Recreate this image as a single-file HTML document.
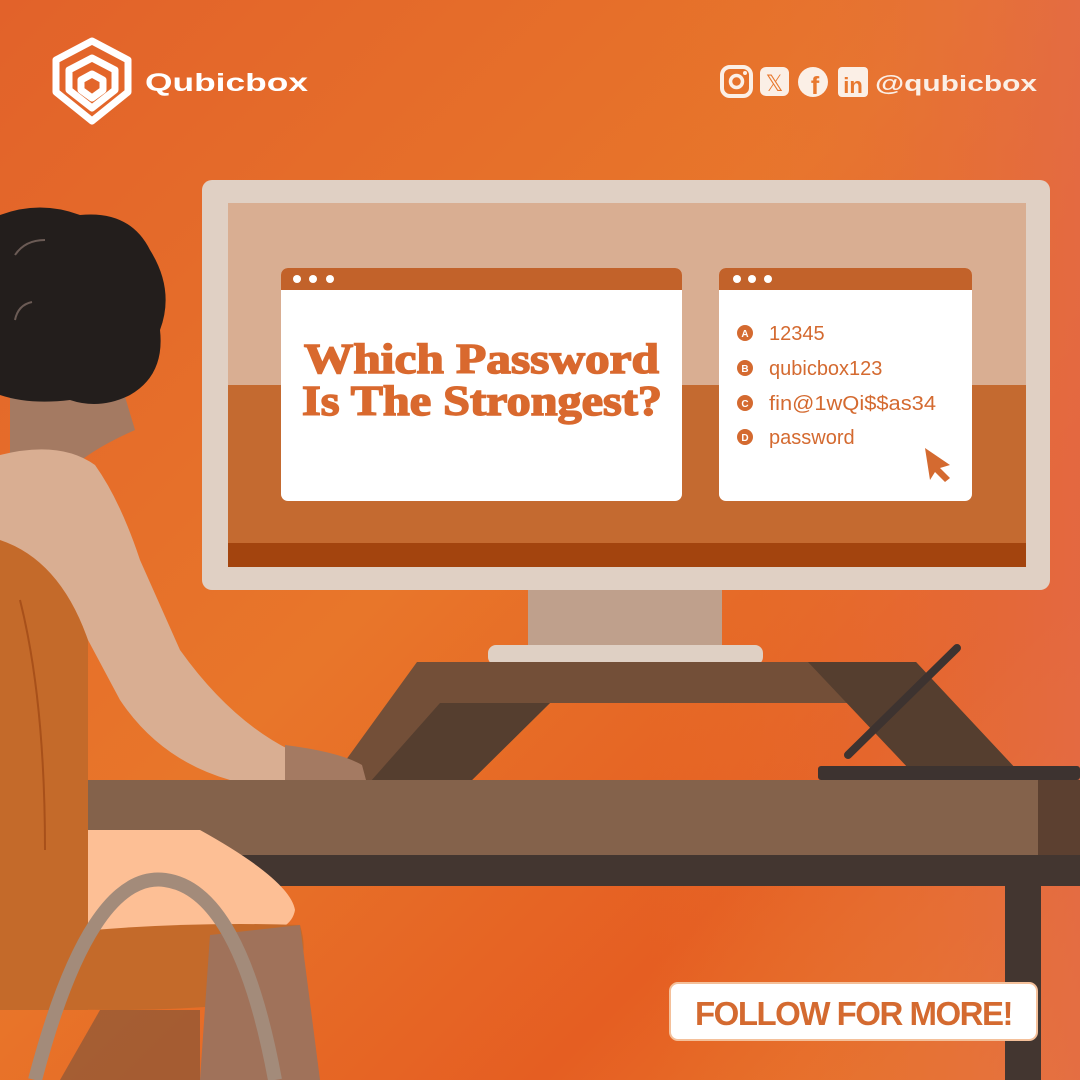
<!DOCTYPE html>
<html><head><meta charset="utf-8"><style>
html,body{margin:0;padding:0;width:1080px;height:1080px;overflow:hidden}
svg{display:block}
</style></head><body>
<svg width="1080" height="1080" viewBox="0 0 1080 1080" xmlns="http://www.w3.org/2000/svg">
<defs>
<linearGradient id="bg" x1="0" y1="0" x2="1" y2="1">
<stop offset="0" stop-color="#E2622A"/><stop offset="0.45" stop-color="#E8762A"/><stop offset="0.75" stop-color="#E55E22"/><stop offset="1" stop-color="#E9802E"/>
</linearGradient>
<linearGradient id="bg2" x1="0" y1="0" x2="1" y2="0">
<stop offset="0.6" stop-color="#E8782E" stop-opacity="0"/><stop offset="1" stop-color="#E36A48" stop-opacity="0.8"/>
</linearGradient>
</defs>
<rect width="1080" height="1080" fill="url(#bg)"/>
<rect width="1080" height="1080" fill="url(#bg2)"/>

<!-- logo -->
<g fill="none" stroke="#fff" stroke-width="7" stroke-linejoin="round">
<path d="M92 41 L128 60 L128 92 L92 121 L56 92 L56 60 Z"/>
<path d="M92 58 L115 70 L115 90 L92 108 L69 90 L69 70 Z"/>
<path d="M92 74 L103 80 L103 90 L92 98 L81 90 L81 80 Z"/>
</g>
<text x="145" y="91" font-family="Liberation Sans, sans-serif" font-weight="900" font-size="25" fill="#fff" textLength="163" lengthAdjust="spacingAndGlyphs">Qubicbox</text>

<!-- social -->
<g fill="#FBEFE6">
<rect x="722" y="67" width="29" height="29" rx="8" fill="none" stroke="#FBEFE6" stroke-width="4"/>
<circle cx="736.5" cy="81.5" r="6" fill="none" stroke="#FBEFE6" stroke-width="3.5"/>
<circle cx="745" cy="73" r="2"/>
<rect x="760" y="67" width="29" height="29" rx="6"/>
<text x="774.5" y="91" text-anchor="middle" font-family="DejaVu Sans, sans-serif" font-size="22" fill="#E8782E">𝕏</text>
<circle cx="813" cy="82" r="15"/>
<text x="815" y="94" text-anchor="middle" font-family="Liberation Sans, sans-serif" font-weight="bold" font-size="25" fill="#E8782E">f</text>
<rect x="838" y="67" width="30" height="30" rx="4"/>
<text x="853" y="93" text-anchor="middle" font-family="Liberation Sans, sans-serif" font-weight="bold" font-size="22" fill="#E8782E">in</text>
</g>
<text x="875" y="91" font-family="Liberation Sans, sans-serif" font-weight="900" font-size="22" fill="#FBEFE6" textLength="162" lengthAdjust="spacingAndGlyphs">@qubicbox</text>

<!-- monitor -->
<rect x="528" y="585" width="194" height="64" fill="#BFA08C"/>
<rect x="488" y="645" width="275" height="20" rx="8" fill="#DFD0C4"/>
<rect x="202" y="180" width="848" height="410" rx="10" fill="#E0D0C4"/>
<rect x="228" y="203" width="798" height="182" fill="#D9AE92"/>
<rect x="228" y="385" width="798" height="158" fill="#C46A30"/>
<rect x="228" y="543" width="798" height="24" fill="#A3440E"/>

<!-- card 1 -->
<rect x="281" y="268" width="401" height="233" rx="7" fill="#fff"/>
<path d="M281 290 V275 a7 7 0 0 1 7 -7 H675 a7 7 0 0 1 7 7 V290 Z" fill="#C2622A"/>
<g fill="#fff"><circle cx="297" cy="279" r="4"/><circle cx="313" cy="279" r="4"/><circle cx="330" cy="279" r="4"/></g>
<g font-family="Liberation Serif, serif" font-weight="bold" font-size="42" fill="#D9692E" stroke="#D9692E" stroke-width="1.5">
<text x="304" y="373" textLength="355" lengthAdjust="spacingAndGlyphs">Which Password</text>
<text x="302" y="415" textLength="360" lengthAdjust="spacingAndGlyphs">Is The Strongest?</text>
</g>

<!-- card 2 -->
<rect x="719" y="268" width="253" height="233" rx="7" fill="#fff"/>
<path d="M719 290 V275 a7 7 0 0 1 7 -7 H965 a7 7 0 0 1 7 7 V290 Z" fill="#C2622A"/>
<g fill="#fff"><circle cx="737" cy="279" r="4"/><circle cx="752" cy="279" r="4"/><circle cx="768" cy="279" r="4"/></g>
<g fill="#D46A30">
<circle cx="745" cy="333" r="8"/><circle cx="745" cy="368" r="8"/><circle cx="745" cy="403" r="8"/><circle cx="745" cy="437" r="8"/>
</g>
<g font-family="Liberation Sans, sans-serif" font-weight="bold" font-size="10" fill="#fff" text-anchor="middle">
<text x="745" y="337">A</text><text x="745" y="372">B</text><text x="745" y="407">C</text><text x="745" y="441">D</text>
</g>
<g font-family="Liberation Sans, sans-serif" font-size="20" fill="#D46A30">
<text x="769" y="340">12345</text><text x="769" y="375">qubicbox123</text><text x="769" y="410" textLength="167" lengthAdjust="spacingAndGlyphs">fin@1wQi$$as34</text><text x="769" y="444">password</text>
</g>
<path d="M925 448 L950 465 L940 468 L950 478 L945 482 L935 472 L930 480 Z" fill="#D46A30"/>

<!-- riser -->
<path d="M417 662 L916 662 L1017 770 L910 770 L850 703 L550 703 L470 782 L330 782 Z" fill="#734F38"/>
<path d="M440 703 L550 703 L470 782 L370 782 Z" fill="#553E2F"/>
<path d="M808 662 L916 662 L1017 770 L910 770 Z" fill="#553E2F"/>
<line x1="957" y1="648" x2="848" y2="755" stroke="#3D3330" stroke-width="8" stroke-linecap="round"/>
<rect x="818" y="766" width="262" height="14" rx="3" fill="#3D3330"/>

<!-- desk -->
<rect x="190" y="850" width="890" height="36" fill="#433630"/>
<rect x="1005" y="880" width="36" height="200" fill="#433630"/>
<rect x="88" y="780" width="950" height="75" fill="#84624B"/>
<rect x="1038" y="780" width="42" height="75" fill="#5C4030"/>

<!-- person -->
<path d="M0 540 Q60 560 88 640 L88 1010 L0 1010 Z" fill="#C46A2A"/>
<path d="M20 600 Q45 700 45 850" stroke="#A8501A" stroke-width="2" fill="none"/>
<path d="M88 830 L200 830 Q290 880 295 910 Q290 940 220 935 L88 930 Z" fill="#FDBF95"/>
<path d="M0 940 Q150 920 300 925 Q320 990 230 1005 Q120 1015 0 1005 Z" fill="#C46A2A"/>
<path d="M210 935 L300 925 L320 1080 L200 1080 Z" fill="#A0725A"/>
<path d="M60 1080 L100 1010 L200 1010 L200 1080 Z" fill="#7A523A" opacity="0.6"/>
<path d="M35 1080 Q90 870 165 880 Q240 890 275 1080" stroke="#A38B7A" stroke-width="14" fill="none"/>
<path d="M10 380 L120 380 L135 430 Q90 450 70 470 L10 480 Z" fill="#A47A62"/>
<path d="M0 455 Q60 440 95 465 Q120 500 140 560 L180 650 Q230 720 290 750 L290 780 L230 780 Q160 760 120 700 L88 640 Q60 560 0 540 Z" fill="#D9AE92"/>
<path d="M285 745 Q340 752 362 765 L366 780 L285 780 Z" fill="#A47A62"/>
<path d="M0 215 Q40 200 80 215 Q130 210 150 250 Q175 290 160 330 Q165 375 130 395 Q100 410 70 400 Q30 405 0 395 Z" fill="#231E1C"/>
<path d="M15 255 Q25 240 45 240" stroke="#6b5b55" stroke-width="2" fill="none"/>
<path d="M15 320 Q18 305 32 302" stroke="#6b5b55" stroke-width="2" fill="none"/>

<!-- follow button -->
<rect x="670" y="983" width="367" height="57" rx="8" fill="#fff" stroke="#F4C09A" stroke-width="2"/>
<text x="853.5" y="1025" text-anchor="middle" font-family="Liberation Sans Narrow, Liberation Sans, sans-serif" font-weight="bold" font-size="33" fill="#D46A30" letter-spacing="-1.5">FOLLOW FOR MORE!</text>
</svg>
</body></html>
